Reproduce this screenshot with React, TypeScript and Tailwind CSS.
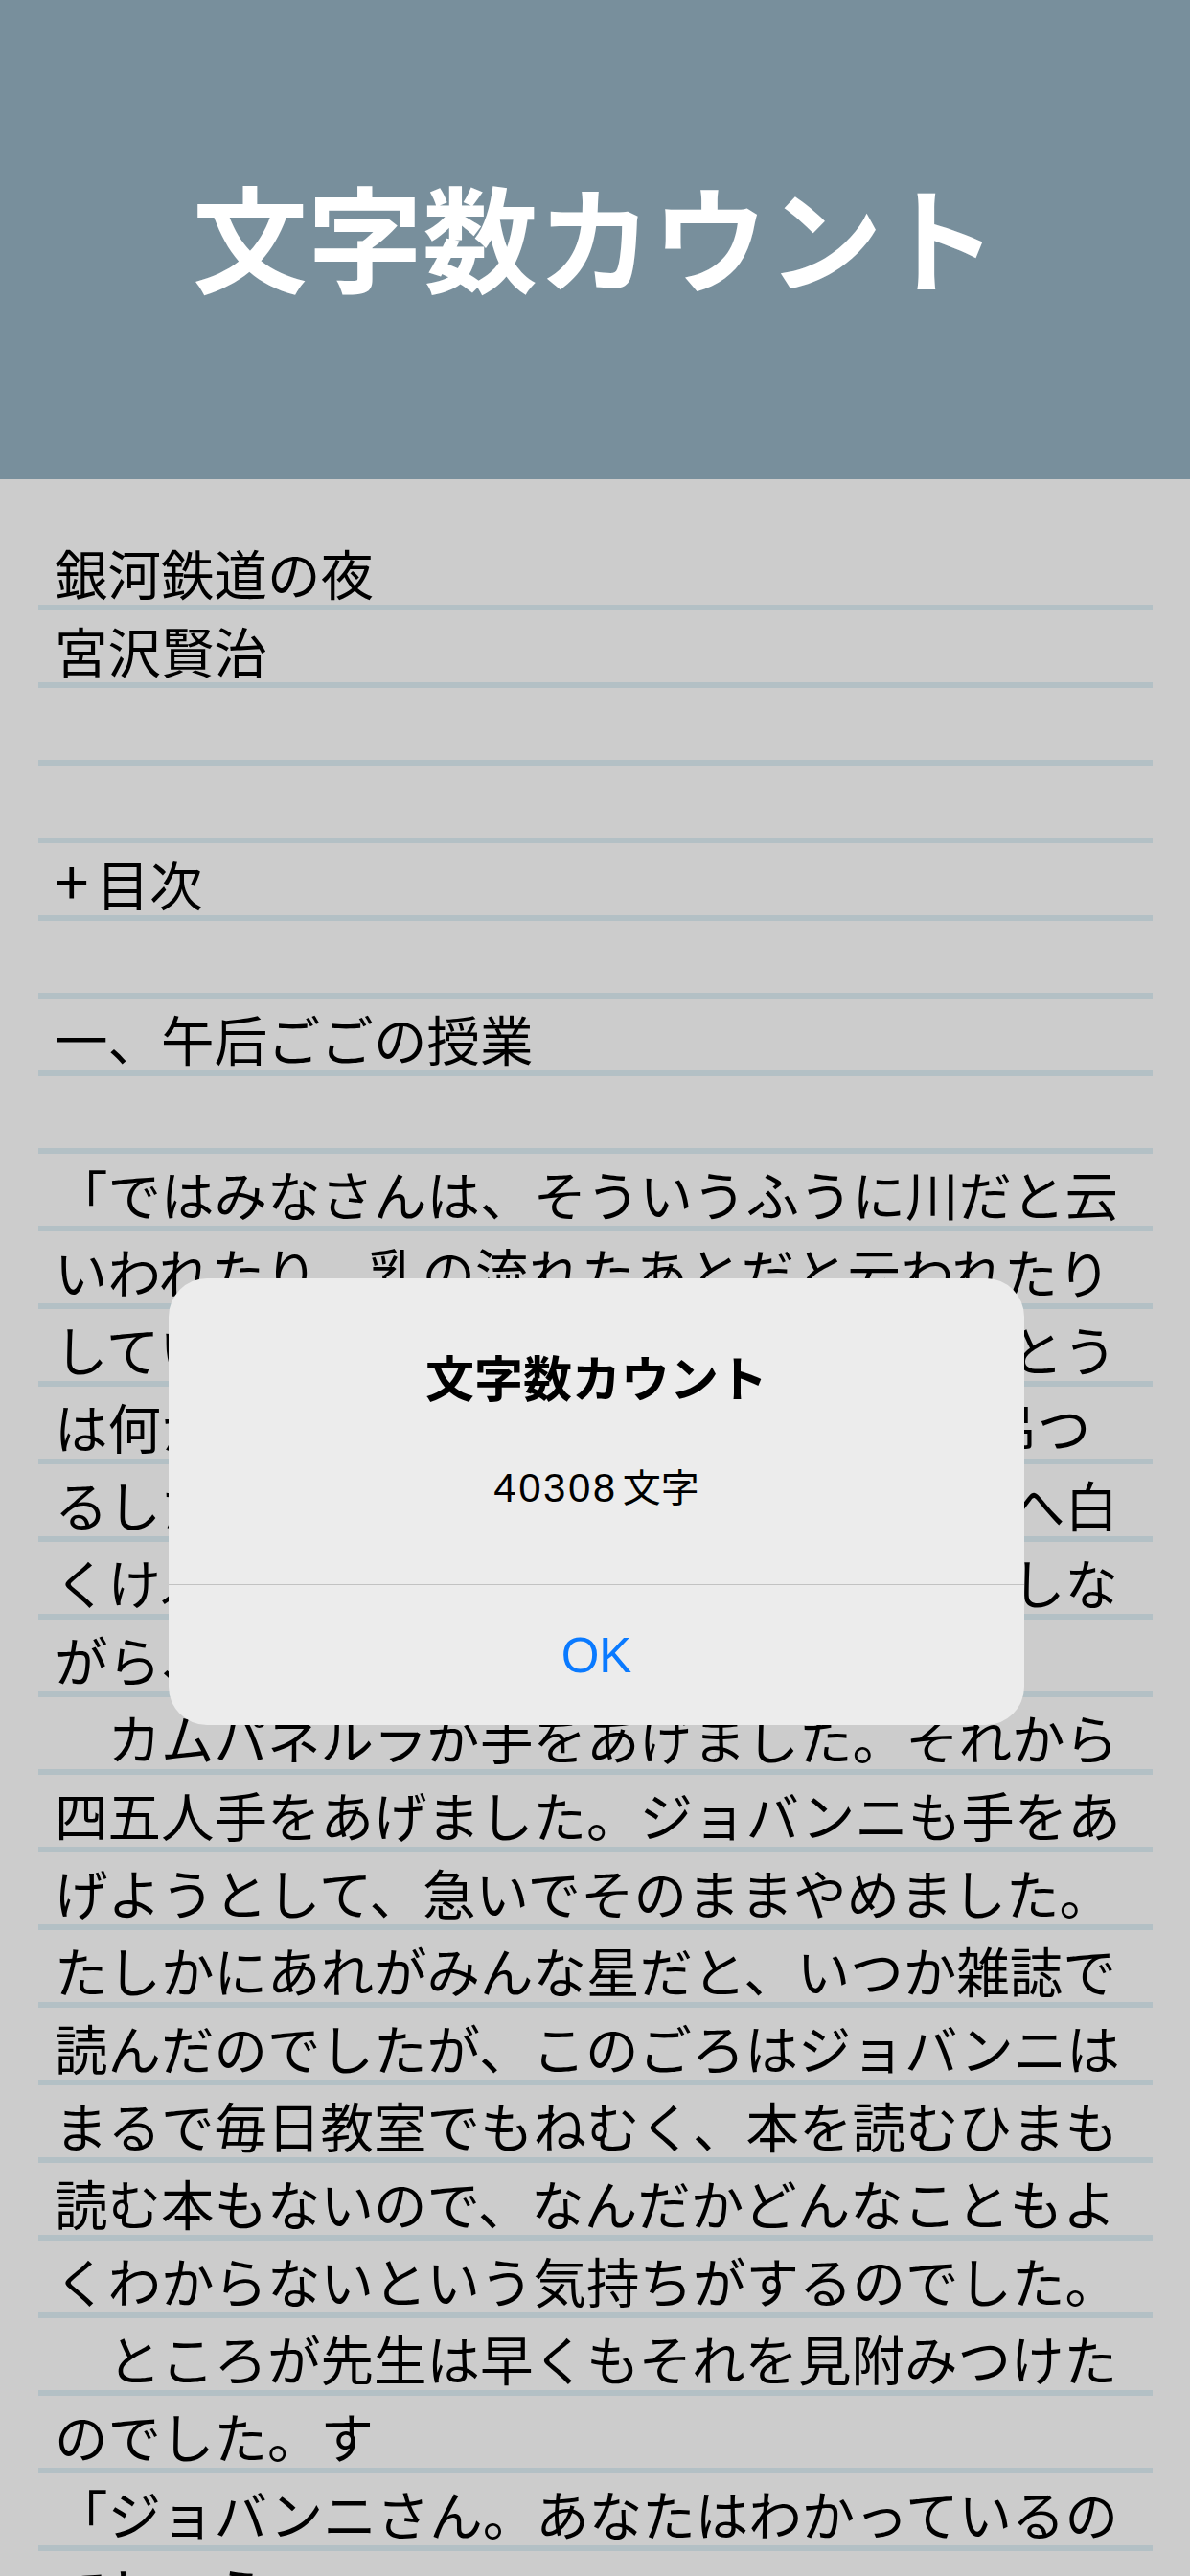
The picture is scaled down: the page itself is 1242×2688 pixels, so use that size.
import React from "react";

const rows: React.ReactNode[] = [
  "銀河鉄道の夜",
  "宮沢賢治",
  "",
  "",
  <>
    <span className="text-[64px] leading-none mr-[8px]">+</span>目次
  </>,
  "",
  "一、午后ごごの授業",
  "",
  "「ではみなさんは、そういうふうに川だと云",
  "いわれたり、乳の流れたあとだと云われたり",
  "していたこのぼんやりと白いものがほんとう",
  "は何かご承知ですか。」先生は、黒板に吊つ",
  "るした大きな黒い星座の図の、上から下へ白",
  "くけぶった銀河帯のようなところを指さしな",
  "がら、みんなに問といをかけました。",
  "　カムパネルラが手をあげました。それから",
  "四五人手をあげました。ジョバンニも手をあ",
  "げようとして、急いでそのままやめました。",
  "たしかにあれがみんな星だと、いつか雑誌で",
  "読んだのでしたが、このごろはジョバンニは",
  "まるで毎日教室でもねむく、本を読むひまも",
  "読む本もないので、なんだかどんなこともよ",
  "くわからないという気持ちがするのでした。",
  "　ところが先生は早くもそれを見附みつけた",
  "のでした。す",
  "「ジョバンニさん。あなたはわかっているの",
  "でしょう。」",
];

const jp = "font-['Noto_Sans_CJK_JP','Noto_Sans',sans-serif]";

const App = () => {
  return (
    <div className="relative w-[1242px] h-[2688px] overflow-hidden bg-[#cccccc]">
      <div className="h-[500px] bg-[#788f9c] flex items-center justify-center">
        <h1 className={`${jp} text-white font-bold text-[120px] leading-none mb-[10px]`}>
          文字数カウント
        </h1>
      </div>

      <div className="pt-[56px] pl-[40px] pr-[39px]">
        {rows.map((t, i) => (
          <div
            key={i}
            className="h-[81px] border-b-[6px] border-[#b3c0c5] pl-[17px] overflow-hidden"
          >
            <p
              className={`${jp} text-black text-[55.5px] leading-[75px] whitespace-nowrap pt-[4px]`}
            >
              {t}
            </p>
          </div>
        ))}
      </div>

      {/* alert */}
      <div className="absolute left-[176px] top-[1334px] w-[893px] h-[466px] rounded-[40px] bg-[#ececec] flex flex-col">
        <div className="h-[319px] flex flex-col items-center">
          <p className={`${jp} mt-[72px] text-black font-bold text-[51px] leading-[60px]`}>
            文字数カウント
          </p>
          <p className="mt-[60px] flex items-baseline text-black leading-[48px]">
            <span className="font-['Liberation_Sans',sans-serif] text-[42px] tracking-[2.5px]">
              40308
            </span>
            <span className={`${jp} text-[40px] ml-[5px]`}>文字</span>
          </p>
        </div>
        <div className="h-px bg-[#c2c2c2]" />
        <div className="flex-1 flex items-center justify-center">
          <span className="font-['Liberation_Sans',sans-serif] text-[51px] leading-none text-[#0a7aff]">
            OK
          </span>
        </div>
      </div>
    </div>
  );
};

export default App;
